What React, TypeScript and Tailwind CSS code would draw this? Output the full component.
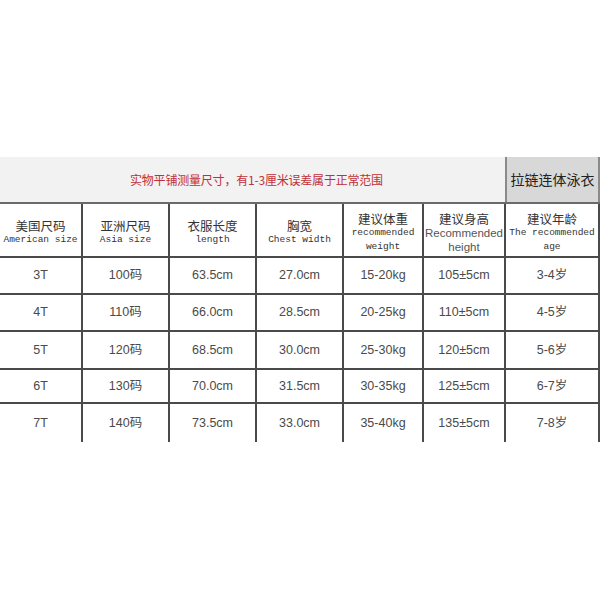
import React from "react";

const widths = ["w-[83px]", "w-[87px]", "w-[87px]", "w-[87px]", "w-[80px]", "w-[82px]", "w-[94px]"];

const rows = [
  { h: "h-[37px]", cells: ["3T", "100码", "63.5cm", "27.0cm", "15-20kg", "105±5cm", "3-4岁"] },
  { h: "h-[37px]", cells: ["4T", "110码", "66.0cm", "28.5cm", "20-25kg", "110±5cm", "4-5岁"] },
  { h: "h-[38px]", cells: ["5T", "120码", "68.5cm", "30.0cm", "25-30kg", "120±5cm", "5-6岁"] },
  { h: "h-[34px]", cells: ["6T", "130码", "70.0cm", "31.5cm", "30-35kg", "125±5cm", "6-7岁"] },
  { h: "h-[38px]", cells: ["7T", "140码", "73.5cm", "33.0cm", "35-40kg", "135±5cm", "7-8岁"] },
];

const cjk = "font-['Noto_Sans_CJK_SC',sans-serif]";
const mono = "font-['Liberation_Mono','Noto_Sans_CJK_SC',monospace]";

function Header({ zh, en, sans }: { zh: string; en: string[]; sans?: boolean }) {
  return (
    <div className="flex flex-col items-center leading-[14px]">
      <div className={`${cjk} text-[12.5px] text-[#333]`}>{zh}</div>
      {en.map((t) => (
        <div
          key={t}
          className={
            sans
              ? "font-['Liberation_Sans',sans-serif] text-[11.5px] text-[#555] leading-[14px]"
              : `${mono} text-[9.5px] text-[#333] leading-[14px]`
          }
        >
          {t}
        </div>
      ))}
    </div>
  );
}

export default function App() {
  const headers = [
    { zh: "美国尺码", en: ["American size"] },
    { zh: "亚洲尺码", en: ["Asia size"] },
    { zh: "衣服长度", en: ["length"] },
    { zh: "胸宽", en: ["Chest width"] },
    { zh: "建议体重", en: ["recommended", "weight"] },
    { zh: "建议身高", en: ["Recommended", "height"], sans: true },
    { zh: "建议年龄", en: ["The recommended", "age"] },
  ];
  return (
    <div className="w-[600px] h-[600px] bg-white pt-[157px]">
      <div className="flex h-[47px] border-b-2 border-[#6a6a6a]">
        <div className="flex-1 bg-[#f2f2f2] flex items-center pl-[130px]">
          <span className={`${cjk} text-[12px] text-[#c0303a] tracking-[-0.2px]`}>
            实物平铺测量尺寸，有1-3厘米误差属于正常范围
          </span>
        </div>
        <div className="w-[95px] bg-[#d8d8d8] border-l-2 border-r-2 border-[#8a8a8a] flex items-center justify-center">
          <span className={`${cjk} text-[14px] text-[#222]`}>拉链连体泳衣</span>
        </div>
      </div>
      <div className="flex h-[54px] border-b-2 border-[#4a4a4a]">
        {headers.map((h, i) => (
          <div key={i} className={`${widths[i]} border-r-2 border-[#4a4a4a] flex items-center justify-center pt-[5px]`}>
            <Header zh={h.zh} en={h.en} sans={h.sans} />
          </div>
        ))}
      </div>
      {rows.map((r, ri) => (
        <div key={ri} className={`flex ${r.h} ${ri < rows.length - 1 ? "border-b-2 border-[#4a4a4a]" : ""}`}>
          {r.cells.map((c, i) => (
            <div
              key={i}
              className={`${widths[i]} border-r-2 border-[#4a4a4a] flex items-center justify-center font-['Liberation_Sans','Noto_Sans_CJK_SC',sans-serif] text-[12.5px] text-[#4a4a4a]`}
            >
              {c}
            </div>
          ))}
        </div>
      ))}
    </div>
  );
}
